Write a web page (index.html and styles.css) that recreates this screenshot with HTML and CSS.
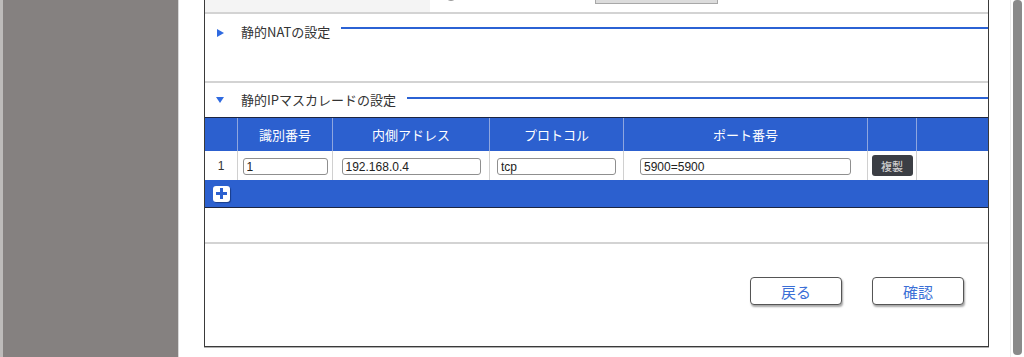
FILE: index.html
```html
<!DOCTYPE html>
<html lang="ja">
<head>
    <meta charset="UTF-8">
    <meta name="viewport" content="width=device-width, initial-scale=1.0">
    <title>静的IPマスカレードの設定</title>
    <link rel="stylesheet" href="styles.css">
</head>
<body>
    <div class="layout">
        <aside class="sidenav"></aside>
        <main class="content">
            <div class="panel">
                <div class="prev-row">
                    <div class="prev-label"></div>
                    <div class="prev-value">
                        <span class="radio"></span>
                        <span class="prev-btn"></span>
                    </div>
                </div>

                <section class="group group-closed">
                    <h3 class="group-head">
                        <span class="arrow"><span class="tri-right"></span></span>
                        <span class="group-title">静的NATの設定</span>
                        <span class="rule"></span>
                    </h3>
                </section>

                <section class="group">
                    <h3 class="group-head">
                        <span class="arrow"><span class="tri-down"></span></span>
                        <span class="group-title">静的IPマスカレードの設定</span>
                        <span class="rule"></span>
                    </h3>
                    <table class="masq">
                        <colgroup>
                            <col class="c-no">
                            <col class="c-id">
                            <col class="c-addr">
                            <col class="c-proto">
                            <col class="c-port">
                            <col class="c-copy">
                            <col>
                        </colgroup>
                        <thead>
                            <tr>
                                <th></th>
                                <th>識別番号</th>
                                <th>内側アドレス</th>
                                <th>プロトコル</th>
                                <th>ポート番号</th>
                                <th></th>
                                <th></th>
                            </tr>
                        </thead>
                        <tbody>
                            <tr class="data-row">
                                <td class="row-no">1</td>
                                <td><input type="text" class="in-id" value="1"></td>
                                <td><input type="text" class="in-addr" value="192.168.0.4"></td>
                                <td><input type="text" class="in-proto" value="tcp"></td>
                                <td><input type="text" class="in-port" value="5900=5900"></td>
                                <td><button type="button" class="copy-btn">複製</button></td>
                                <td></td>
                            </tr>
                            <tr class="add-row">
                                <td colspan="7">
                                    <button type="button" class="add-btn" aria-label="追加"><span class="plus"></span></button>
                                </td>
                            </tr>
                        </tbody>
                    </table>
                    <div class="blank"></div>
                </section>

                <div class="actions">
                    <button type="button" class="action-btn">戻る</button>
                    <button type="button" class="action-btn">確認</button>
                </div>
            </div>
        </main>
        <div class="scrollbar"><div class="thumb"></div></div>
    </div>
</body>
</html>
```

FILE: styles.css
```css
body {
    margin: 0;
    background: #fff;
    font-family: "Noto Sans CJK JP", "Liberation Sans", sans-serif;
    color: #333;
}

.layout {
    display: flex;
    height: 357px;
    overflow: hidden;
}

.sidenav {
    width: 175px;
    flex: none;
    background: #858180;
    border-left: 3px solid #bdbbba;
    border-right: 1px solid #d8d8d8;
}

.content {
    flex: 1;
    padding: 0 21px 0 25px;
}

.panel {
    height: 347px;
    box-sizing: border-box;
    border: 1px solid #3a3a3a;
    border-top: none;
    box-shadow: 0 1px 0 #b0b0b0;
    display: flex;
    flex-direction: column;
}

/* tail of the section above */
.prev-row {
    display: flex;
    height: 12px;
    border-bottom: 2px solid #d3d3d3;
    overflow: hidden;
}

.prev-label {
    width: 225px;
    background: #f4f4f4;
}

.prev-value {
    display: flex;
    align-items: flex-start;
}

.radio {
    width: 12px;
    height: 12px;
    margin: -11px 0 0 15px;
    border: 1px solid #999;
    border-radius: 50%;
    box-sizing: border-box;
}

.prev-btn {
    width: 123px;
    height: 24px;
    margin: -20px 0 0 138px;
    background: #dcdcdc;
    border: 1px solid #a8a8a8;
    box-sizing: border-box;
}

/* collapsible groups */
.group-closed {
    height: 69px;
    box-sizing: border-box;
    border-bottom: 2px solid #d3d3d3;
}

.group-head {
    display: flex;
    align-items: center;
    margin: 0;
    padding: 8px 0 0 12px;
    font-size: 13px;
    font-weight: normal;
    line-height: 20px;
    color: #333;
}

.group-closed .rule {
    margin-bottom: 8px;
}

.group + .group .group-head {
    padding-top: 7px;
    margin-bottom: 7px;
}

.arrow {
    width: 24px;
    flex: none;
    display: flex;
    align-items: center;
}

.tri-right {
    width: 0;
    height: 0;
    border-left: 7px solid #2f6ae0;
    border-top: 4px solid transparent;
    border-bottom: 4px solid transparent;
    margin-top: 1px;
}

.tri-down {
    width: 0;
    height: 0;
    border-top: 6px solid #2f6ae0;
    border-left: 4px solid transparent;
    border-right: 4px solid transparent;
    margin-left: -1px;
}

.rule {
    flex: 1;
    height: 2px;
    margin: 0 0 5px 11px;
    background: #2b62d4;
}

/* table */
.masq {
    width: 100%;
    table-layout: fixed;
    border-collapse: separate;
    border-spacing: 0;
    border-top: 1px solid #1c2540;
    border-bottom: 1px solid #1c2540;
    font-size: 13px;
}

.c-no { width: 32px; }
.c-id { width: 95px; }
.c-addr { width: 157px; }
.c-proto { width: 134px; }
.c-port { width: 244px; }
.c-copy { width: 49px; }

.masq th {
    height: 33px;
    padding: 0;
    background: #2c60cf;
    color: #fff;
    font-weight: normal;
    border-left: 1px solid #8ea6df;
}

.masq th:first-child {
    border-left: none;
}

.data-row td {
    height: 29px;
    padding: 0;
    text-align: center;
    border-left: 1px solid #d0d0d0;
    background: #fff;
}

.data-row td:first-child {
    border-left: none;
}

.row-no {
    font-family: "Liberation Sans", sans-serif;
    font-size: 12px;
    color: #333;
}

.data-row input {
    height: 17px;
    box-sizing: border-box;
    padding: 0 3px;
    border: 1px solid #8f8f8f;
    border-radius: 3px;
    font-family: "Liberation Sans", sans-serif;
    font-size: 12px;
    color: #222;
    vertical-align: middle;
}

.in-id { width: 85px; }
.in-addr { width: 139px; }
.in-proto { width: 119px; }
.in-port { width: 211px; }

.copy-btn {
    width: 41px;
    height: 21px;
    padding: 0;
    border: none;
    border-radius: 3px;
    background: #3b3e44;
    color: #cfcfcf;
    font-family: "Noto Sans CJK JP", sans-serif;
    font-size: 11px;
    font-weight: 500;
    vertical-align: middle;
}

.add-row td {
    height: 27px;
    padding: 0 0 0 8px;
    background: #2c60cf;
}

.add-btn {
    display: flex;
    align-items: center;
    justify-content: center;
    width: 17px;
    height: 16px;
    padding: 0;
    border: none;
    border-radius: 3px;
    background: #fff;
    box-shadow: 1px 1px 1px #1a3d8a;
}

.plus {
    position: relative;
    width: 11px;
    height: 3px;
    background: #2c60cf;
}

.plus::after {
    content: "";
    position: absolute;
    left: 4px;
    top: -4px;
    width: 3px;
    height: 11px;
    background: #2c60cf;
}

.blank {
    height: 34px;
    border-bottom: 2px solid #d3d3d3;
}

/* footer buttons */
.actions {
    flex: 1;
    display: flex;
    justify-content: flex-end;
    align-items: flex-start;
    gap: 30px;
    padding: 33px 24px 0 0;
}

.action-btn {
    width: 92px;
    height: 28px;
    padding: 0;
    background: #fff;
    border: 1px solid #555;
    border-radius: 4px;
    box-shadow: 1px 2px 2px rgba(0, 0, 0, 0.35);
    color: #3b6fd6;
    font-family: "Noto Sans CJK JP", sans-serif;
    font-size: 15px;
}

/* page scrollbar */
.scrollbar {
    width: 14px;
    flex: none;
    border-left: 1px solid #ececec;
    box-sizing: border-box;
    padding: 0 2px 2px 2px;
}

.thumb {
    height: 355px;
    border-radius: 4px;
    background: #8a8a8a;
}
```
